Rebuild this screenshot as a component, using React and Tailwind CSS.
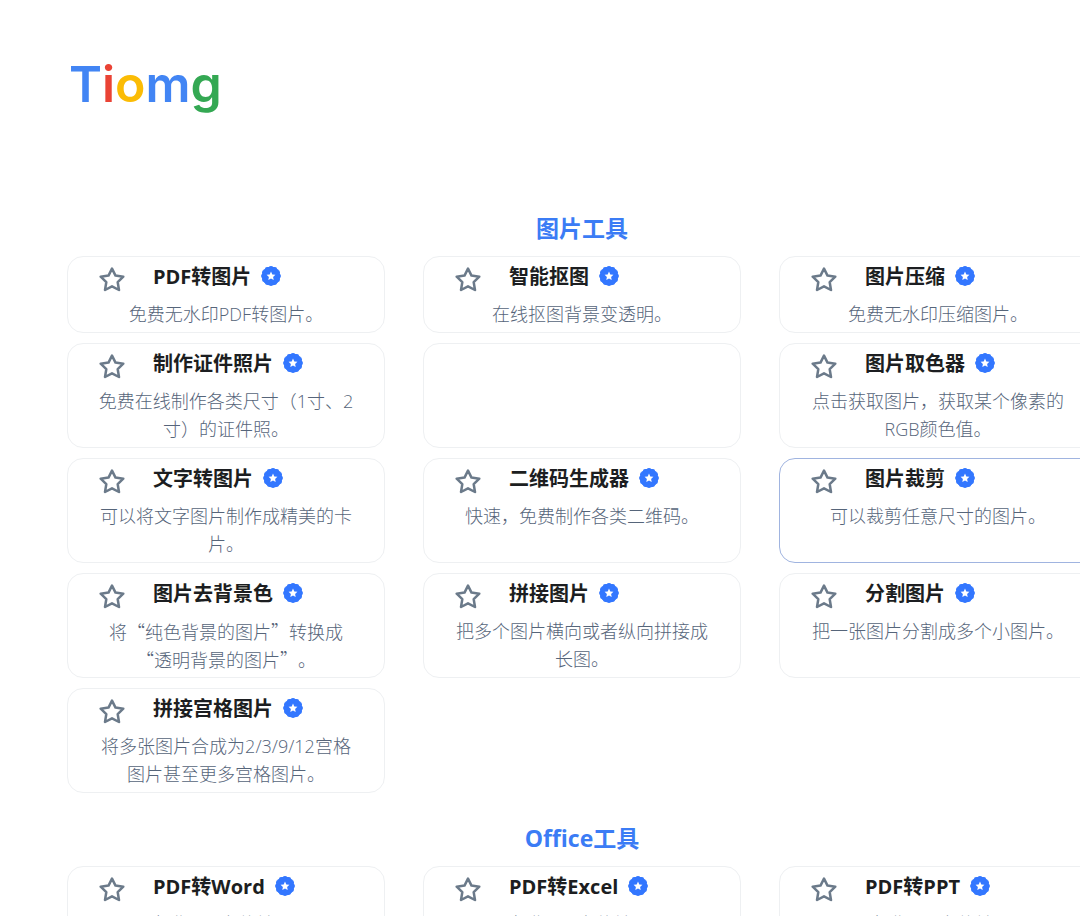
import React from "react";

const sections = [
  {
    title: "图片工具",
    tools: [
      { name: "PDF转图片", desc: "免费无水印PDF转图片。" },
      { name: "智能抠图", desc: "在线抠图背景变透明。" },
      { name: "图片压缩", desc: "免费无水印压缩图片。" },
      { name: "制作证件照片", desc: "免费在线制作各类尺寸（1寸、2寸）的证件照。" },
      null,
      { name: "图片取色器", desc: "点击获取图片，获取某个像素的RGB颜色值。" },
      { name: "文字转图片", desc: "可以将文字图片制作成精美的卡片。" },
      { name: "二维码生成器", desc: "快速，免费制作各类二维码。" },
      { name: "图片裁剪", desc: "可以裁剪任意尺寸的图片。", active: true },
      {
        name: "图片去背景色",
        desc: "将“纯色背景的图片”转换成“透明背景的图片”。",
        wideQuotes: true,
      },
      { name: "拼接图片", desc: "把多个图片横向或者纵向拼接成长图。" },
      { name: "分割图片", desc: "把一张图片分割成多个小图片。" },
      { name: "拼接宫格图片", desc: "将多张图片合成为2/3/9/12宫格图片甚至更多宫格图片。" },
    ],
  },
  {
    title: "Office工具",
    tools: [
      { name: "PDF转Word", desc: "可以免费PDF文件转Word。" },
      { name: "PDF转Excel", desc: "可以免费PDF文件转Excel。" },
      { name: "PDF转PPT", desc: "可以免费PDF文件转PPT。" },
    ],
  },
];

const Logo = () => (
  <a
    href="#"
    aria-label="Tiomg"
    className="inline-block font-['Inter',sans-serif] text-[50px] leading-[60px] font-semibold"
  >
    <span className="text-[#4285f4]">T</span>
    <span className="text-[#ea4335]">i</span>
    <span className="text-[#fbbc05]">o</span>
    <span className="text-[#4285f4]">m</span>
    <span className="text-[#34a853]">g</span>
  </a>
);

const StarIcon = () => (
  <svg width="26" height="25" viewBox="0 0 26 25" fill="none">
    <path
      d="M13 1.6 16.5 8.6 24.3 9.7 18.7 15.2 20 23 13 19.3 6 23 7.3 15.2 1.7 9.7 9.5 8.6Z"
      stroke="#6b7a8a"
      strokeWidth="2.5"
      strokeLinejoin="round"
    />
  </svg>
);

const bumps = Array.from({ length: 12 }, (_, i) => (i * Math.PI) / 6);

const Badge = () => (
  <svg width="20" height="20" viewBox="0 0 20 20" fill="#3377ff" className="mb-[2px] shrink-0">
    <circle cx="10" cy="10" r="9.4" />
    {bumps.map((a) => (
      <circle key={a} cx={10 + 7.6 * Math.cos(a)} cy={10 + 7.6 * Math.sin(a)} r="2.3" />
    ))}
    <path
      d="M10 5.6 11.3 8.5 14.4 8.8 12.1 10.9 12.7 14 10 12.4 7.3 14 7.9 10.9 5.6 8.8 8.7 8.5Z"
      fill="#fff"
    />
  </svg>
);

const ToolCard = ({ tool }) => {
  if (!tool) {
    return <div className="rounded-2xl border border-[#eef0f2]" />;
  }

  return (
    <div
      className={`rounded-2xl border pt-[6px] pb-[4px] ${
        tool.active ? "border-[#a0b4e0]" : "border-[#eef0f2]"
      }`}
    >
      <div className="flex items-start gap-7 pl-[31px]">
        <button type="button" aria-label={`收藏${tool.name}`} className="mt-1 cursor-pointer">
          <StarIcon />
        </button>
        <h3 className="text-xl leading-7 font-bold text-[#1c1e21]">
          <a href="#" className="flex items-center gap-[10px]">
            {tool.name}
            <Badge />
          </a>
        </h3>
      </div>
      <p
        className={`mt-2 px-7 text-center text-lg leading-7 font-light text-[#56657a] ${
          tool.wideQuotes
            ? "font-['Noto_Sans_CJK_SC',sans-serif] [text-spacing-trim:space-all]"
            : ""
        }`}
      >
        {tool.desc}
      </p>
    </div>
  );
};

const App = () => {
  return (
    <div
      lang="zh-CN"
      className="overflow-hidden bg-white pl-[67px] font-['Open_Sans','Noto_Sans_CJK_SC',sans-serif]"
    >
      <header className="pt-[54px] pl-[2px]">
        <Logo />
      </header>
      {/* the third column runs a little past the right edge */}
      <main className="-mr-[17px] flex flex-col gap-[27px] pt-[96px]">
        {sections.map((section) => (
          <section key={section.title}>
            <h2 className="pb-[10px] text-center text-[23px] leading-[36px] font-bold text-[#3b7cf5]">
              {section.title}
            </h2>
            <div className="grid grid-cols-3 gap-x-[38px] gap-y-[10px]">
              {section.tools.map((tool, i) => (
                <ToolCard key={i} tool={tool} />
              ))}
            </div>
          </section>
        ))}
      </main>
    </div>
  );
};

export default App;
